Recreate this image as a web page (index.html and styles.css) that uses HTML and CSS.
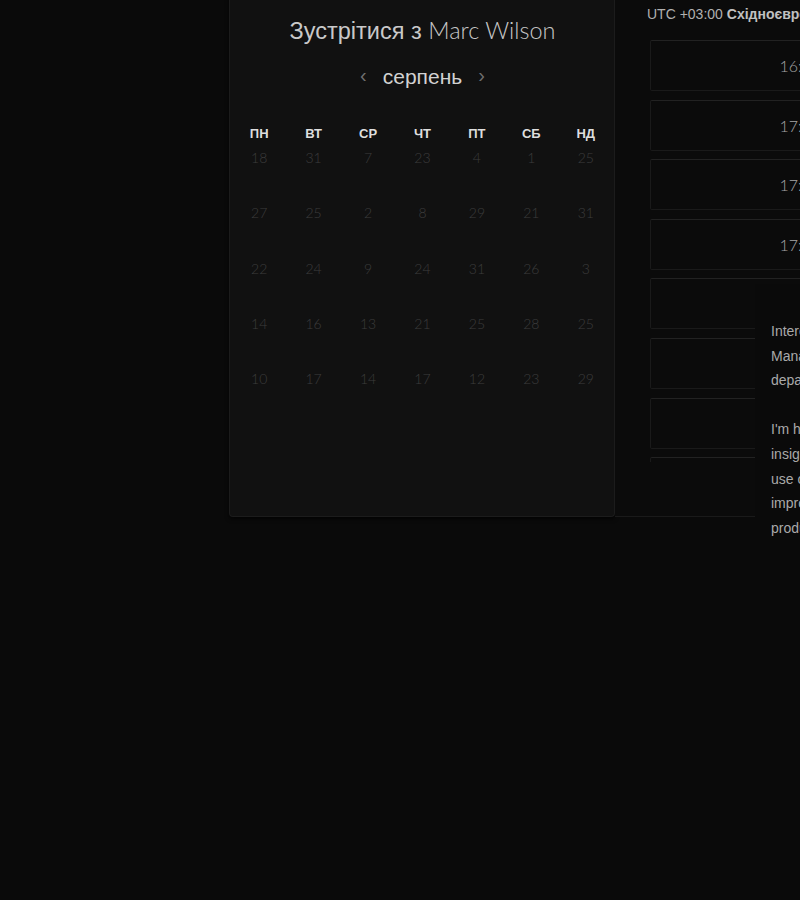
FILE: index.html
```html
<!DOCTYPE html>
<html lang="uk">
<head>
    <meta charset="UTF-8">
    <meta name="viewport" content="width=device-width, initial-scale=1.0">
    <title>Зустрітися з Marc Wilson</title>
    <link rel="stylesheet" href="styles.css">
</head>
<body>
    <div class="page">
        <div class="booking">
            <div class="calendar-card">
                <h2 class="title">Зустрітися з <span class="name">Marc Wilson</span></h2>

                <div class="month-nav">
                    <span class="arrow">&#8249;</span>
                    <span class="month">серпень</span>
                    <span class="arrow">&#8250;</span>
                </div>

                <div class="weekdays">
                    <span>ПН</span>
                    <span>ВТ</span>
                    <span>СР</span>
                    <span>ЧТ</span>
                    <span>ПТ</span>
                    <span>СБ</span>
                    <span>НД</span>
                </div>

                <div class="days">
                    <span>18</span><span>31</span><span>7</span><span>23</span><span>4</span><span>1</span><span>25</span>
                    <span>27</span><span>25</span><span>2</span><span>8</span><span>29</span><span>21</span><span>31</span>
                    <span>22</span><span>24</span><span>9</span><span>24</span><span>31</span><span>26</span><span>3</span>
                    <span>14</span><span>16</span><span>13</span><span>21</span><span>25</span><span>28</span><span>25</span>
                    <span>10</span><span>17</span><span>14</span><span>17</span><span>12</span><span>23</span><span>29</span>
                </div>
            </div>

            <div class="slots-panel">
                <div class="timezone">UTC +03:00 <b>Східноєвропейський час</b></div>

                <div class="slot-list">
                    <button class="slot">16:45</button>
                    <button class="slot">17:00</button>
                    <button class="slot">17:15</button>
                    <button class="slot">17:30</button>
                    <button class="slot">17:45</button>
                    <button class="slot">18:00</button>
                    <button class="slot">18:15</button>
                    <button class="slot">18:30</button>
                </div>

                <div class="about">
                    <p>Interested in talking with a Product<br>
                    Manager from the design<br>
                    department about your work?</p>
                    <p>I'm happy to share practical<br>
                    insights on research, the<br>
                    use of data in decisions and<br>
                    improving the way teams build<br>
                    products together.</p>
                </div>
            </div>
        </div>
    </div>
</body>
</html>
```

FILE: styles.css
```css
html, body {
    margin: 0;
    padding: 0;
    background: #0a0a0a;
    height: 100%;
}

body {
    font-family: "Liberation Sans", Arial, sans-serif;
    color: #cfcfcf;
    overflow: hidden;
}

.page {
    width: 800px;
    height: 900px;
    overflow: hidden;
}

.booking {
    display: flex;
    margin-top: -10px;
    margin-left: 229px;
    width: 1000px;
    height: 527px;
}

.calendar-card {
    width: 386px;
    flex-shrink: 0;
    box-sizing: border-box;
    background: #111111;
    border: 1px solid #1c1c1c;
    border-top: none;
    border-radius: 0 0 4px 4px;
    box-shadow: 0 2px 4px rgba(0, 0, 0, 0.7);
    padding: 25px 1px 0 2px;
}

.title {
    margin: 0;
    text-align: center;
    font-size: 23.5px;
    line-height: 30px;
    font-weight: normal;
    color: #c9c9c9;
}

.title .name {
    font-family: Lato, "Liberation Sans", sans-serif;
    font-weight: 300;
    color: #c6c6c6;
}

.month-nav {
    display: flex;
    justify-content: center;
    align-items: center;
    gap: 16px;
    margin-top: 16px;
    height: 30px;
}

.month {
    font-size: 21px;
    color: #d2d2d2;
}

.arrow {
    font-size: 20px;
    color: #6f6f6f;
    line-height: 20px;
    padding-bottom: 4px;
}

.weekdays,
.days {
    display: grid;
    grid-template-columns: repeat(7, 1fr);
    text-align: center;
}

.weekdays {
    margin-top: 34px;
    font-size: 13px;
    line-height: 16px;
    font-weight: bold;
    color: #dedede;
}

.days {
    margin-top: 8px;
    grid-auto-rows: 55.3px;
    font-family: Lato, "Liberation Sans", sans-serif;
    font-weight: 300;
    font-size: 14px;
    line-height: 16px;
    color: #3c3c3c;
}

.slots-panel {
    position: relative;
    flex: 1;
    background: #0b0b0b;
    border-bottom: 1px solid #1a1a1a;
    padding: 15px 0 0 32px;
}

.timezone {
    font-size: 14px;
    line-height: 18px;
    color: #b0b0b0;
}

.timezone b {
    color: #c0c0c0;
}

.slot-list {
    display: flex;
    flex-direction: column;
    gap: 8.6px;
    margin: 17px 0 0 3px;
    height: 422px;
    overflow: hidden;
}

.slot {
    flex-shrink: 0;
    width: 300px;
    height: 51px;
    background: #0b0b0b;
    border: 1px solid #1a1a1a;
    border-top-color: #222222;
    border-radius: 2px;
    font-family: Lato, "Liberation Sans", sans-serif;
    font-weight: 300;
    font-size: 16px;
    color: #a6a6a6;
    text-align: center;
    cursor: pointer;
}

.about {
    position: absolute;
    left: 140px;
    top: 294px;
    width: 280px;
    height: 300px;
    background: #0a0a0a;
    padding: 35px 16px 0;
    font-size: 14px;
    line-height: 24.6px;
    color: #a9a9a9;
    white-space: nowrap;
}

.about p {
    margin: 0 0 24.6px;
}
```
